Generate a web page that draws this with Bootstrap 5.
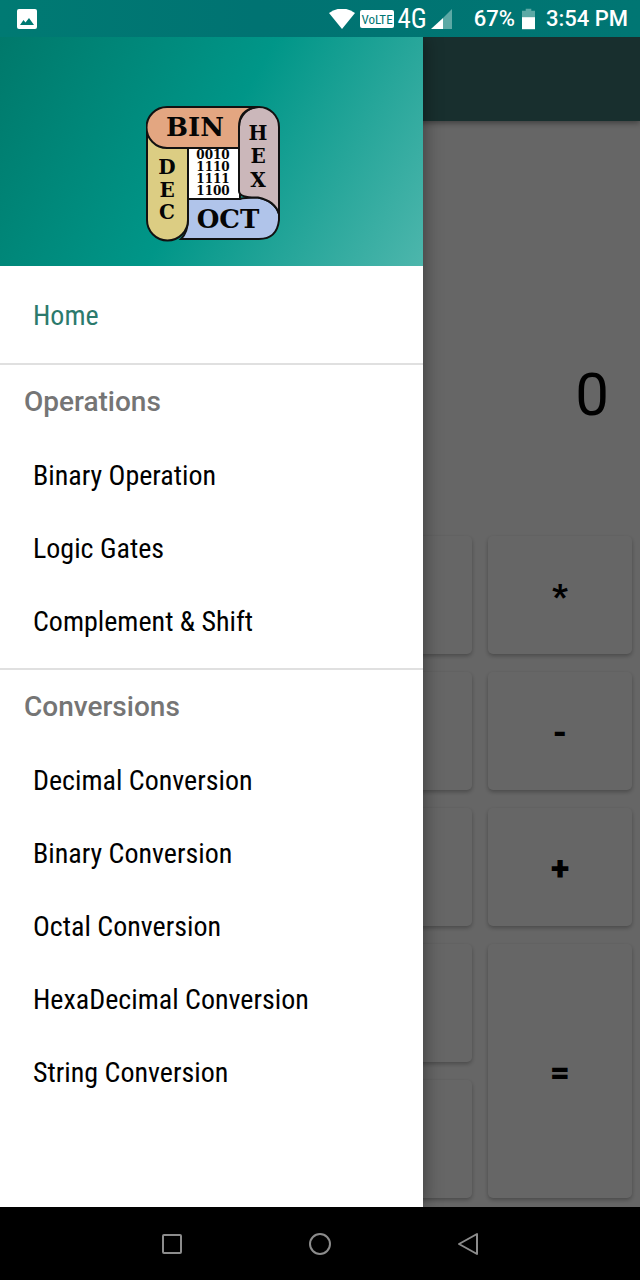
<!DOCTYPE html>
<html lang="en">
<head>
<meta charset="utf-8">
<meta name="viewport" content="width=device-width, initial-scale=1">
<title>Number converter</title>
<link href="https://cdn.jsdelivr.net/npm/bootstrap@5.3.0/dist/css/bootstrap.min.css" rel="stylesheet">
<style>
  body { font-family: Roboto, sans-serif; background: #fff; color: #000; }
  .status-strip { height: 37px; background: linear-gradient(90deg, #007a73, #007372 40%, #007673); color: #fff; font-size: 22px; line-height: 38px; font-weight: 500; padding: 0 12px 0 17px; }
  .network { font-size: 27px; font-weight: 400; padding-left: 2px; }
  .charge { margin-left: 21px; }
  .battery { margin: 0 11px 0 7px; }
  .app-bar { height: 84px; background: #3c7674; box-shadow: 0 2px 6px rgba(0,0,0,.4); }
  .readout { font-size: 60px; line-height: 72px; padding: 140px 31px 0; }
  .keypad { display: grid; grid-template-columns: repeat(4, 1fr); grid-template-rows: repeat(5, 118px); gap: 18px 16px; padding: 8px 8px 9px; }
  .key { background: #fff; border: 0; border-radius: 5px; font-size: 34px; font-weight: 900; line-height: 34px; padding: 2px 0 0; color: #000; box-shadow: 0 2px 4px rgba(0,0,0,.28); }
  .key-third { grid-column: 3; }
  .key-fourth { grid-column: 4; }
  .key-tall { grid-row: 4 / span 2; }
  .scrim { background: rgba(0,0,0,.6); }
  .drawer { width: 66.1%; background: #fff; box-shadow: 0 0 18px rgba(0,0,0,.45); }
  .drawer-top { height: 229px; padding: 44px 0 0 2px; background: linear-gradient(120deg, #00796b 0%, #009688 50%, #4db6ac 100%); }
  .group { padding-bottom: 10px; }
  .group + .group { border-top: 2px solid #e0e0e0; }
  .group-first { padding-top: 13px; padding-bottom: 11px; }
  .group-title { font-size: 28px; line-height: 74px; font-weight: 500; color: #757575; padding-left: 24px; margin: 0; }
  .condensed, .entry { font-family: "Roboto Condensed", "Liberation Sans Narrow", Roboto, sans-serif; }
  .entry { display: block; font-size: 28px; line-height: 73px; color: #000; text-decoration: none; padding-left: 33px; white-space: nowrap; }
  .entry-on { color: #2c7a6c; }
  .system-bar { height: 73px; background: #000; gap: 116px; }
  .system-bar button { background: none; border: 0; padding: 0; line-height: 0; }
  .logo-word { font-family: "DejaVu Serif", serif; font-weight: 700; font-size: 26px; text-anchor: middle; }
  .logo-side { font-size: 20px; }
  .logo-bits { font-size: 12px; }
</style>
</head>
<body class="d-flex flex-column min-vh-100">

<header class="status-strip d-flex align-items-center">
  <svg width="20" height="20" viewBox="0 0 20 20" aria-hidden="true"><rect width="20" height="20" rx="2" fill="#fff"/><path d="M3 16l3.500-5 2 2.500 3.500-4.500 5 7z" fill="#007a73"/></svg>
  <svg class="ms-auto" width="26" height="20" viewBox="0 0 26 20" aria-hidden="true"><path d="M0 4Q13-5 26 4L13 20z" fill="#fff"/></svg>
  <svg class="ms-1" width="36" height="20" viewBox="0 0 36 20" role="img" aria-label="VoLTE"><rect x="1" y="1" width="34" height="18" rx="2" fill="#fff"/><text class="condensed" x="18" y="15" text-anchor="middle" font-size="13" font-weight="400" fill="#007673">VoLTE</text></svg>
  <span class="network condensed">4G</span>
  <svg class="ms-1" width="22" height="20" viewBox="0 0 22 20" aria-hidden="true"><path d="M21 0V20H12V9z" fill="#5ca9a5"/><path d="M12 9V20H0z" fill="#fff"/></svg>
  <span class="charge">67%</span>
  <svg class="battery" width="13" height="22" viewBox="0 0 14 22" aria-hidden="true"><path d="M4 0h6v2h4v7H0V2h4z" fill="#5ca9a5"/><path d="M0 9h14v13H0z" fill="#fff"/></svg>
  <span>3:54 PM</span>
</header>

<div class="position-relative flex-grow-1 d-flex flex-column overflow-hidden">
  <main class="flex-grow-1 d-flex flex-column">
    <div class="app-bar"></div>
    <div class="readout flex-grow-1 d-flex align-items-center justify-content-end"><output>0</output></div>
    <div class="keypad">
      <button type="button" class="key key-third" aria-label="Nine"></button>
      <button type="button" class="key key-fourth">*</button>
      <button type="button" class="key key-third" aria-label="Six"></button>
      <button type="button" class="key key-fourth">-</button>
      <button type="button" class="key key-third" aria-label="Three"></button>
      <button type="button" class="key key-fourth">+</button>
      <button type="button" class="key key-third" aria-label="Point"></button>
      <button type="button" class="key key-fourth key-tall">=</button>
      <button type="button" class="key key-third" aria-label="Clear"></button>
    </div>
  </main>

  <div class="scrim position-absolute top-0 start-0 w-100 h-100"></div>

  <aside class="drawer position-absolute top-0 start-0 h-100">
    <div class="drawer-top d-flex align-items-center justify-content-center">
      <svg width="134" height="136" viewBox="0 0 134 136" role="img" aria-label="BIN HEX OCT DEC" stroke="#111" stroke-width="2">
        <path d="M41 41h53v53H41z" fill="#fff"/>
        <path d="M42 93H94Q98 91.500 112 91.500Q129 95 133 108V114Q131 133 113 133H35Q42 126 42 113z" fill="#b0c4ea"/>
        <path d="M1 20V114a20.500 20.500 0 0 0 41 0V41H20Q6 41 1 22z" fill="#dccd83"/>
        <path d="M93 21a20 20 0 0 1 40 0V108Q129 95 112 91.500Q93 92 93 85z" fill="#cbb7ba"/>
        <path d="M21 1H112Q93 3 93 21V42H21A20.500 20.500 0 0 1 21 1z" fill="#e3a681"/>
        <g class="logo-word" stroke="none" fill="#050505">
          <text x="49" y="30">BIN</text>
          <text x="82" y="122">OCT</text>
          <g class="logo-side"><text x="112" y="34">H</text><text x="112" y="57">E</text><text x="112" y="81">X</text>
          <text x="21" y="68">D</text><text x="21" y="91">E</text><text x="21" y="113">C</text></g>
          <g class="logo-bits"><text x="67" y="53">0010</text><text x="67" y="65">1110</text><text x="67" y="77">1111</text><text x="67" y="89">1100</text></g>
        </g>
      </svg>
    </div>
    <nav aria-label="Main">
      <div class="group group-first">
        <a href="#" class="entry entry-on" aria-current="page">Home</a>
      </div>
      <div class="group">
        <h2 class="group-title">Operations</h2>
        <a href="#" class="entry">Binary Operation</a>
        <a href="#" class="entry">Logic Gates</a>
        <a href="#" class="entry">Complement &amp; Shift</a>
      </div>
      <div class="group">
        <h2 class="group-title">Conversions</h2>
        <a href="#" class="entry">Decimal Conversion</a>
        <a href="#" class="entry">Binary Conversion</a>
        <a href="#" class="entry">Octal Conversion</a>
        <a href="#" class="entry">HexaDecimal Conversion</a>
        <a href="#" class="entry">String Conversion</a>
      </div>
    </nav>
  </aside>
</div>

<footer class="system-bar d-flex align-items-center justify-content-center">
  <button type="button" aria-label="Recent apps"><svg width="32" height="32" viewBox="0 0 32 32" fill="none" stroke="#8c8c8c" stroke-width="2"><rect x="7" y="7" width="18" height="18" rx="1"/></svg></button>
  <button type="button" aria-label="Home screen"><svg width="32" height="32" viewBox="0 0 32 32" fill="none" stroke="#8c8c8c" stroke-width="2"><circle cx="16" cy="16" r="10"/></svg></button>
  <button type="button" aria-label="Back"><svg width="32" height="32" viewBox="0 0 32 32" fill="none" stroke="#8c8c8c" stroke-width="2" stroke-linejoin="round"><path d="M25 6v20L7 16z"/></svg></button>
</footer>

<script src="https://cdn.jsdelivr.net/npm/bootstrap@5.3.0/dist/js/bootstrap.bundle.min.js"></script>
</body>
</html>
